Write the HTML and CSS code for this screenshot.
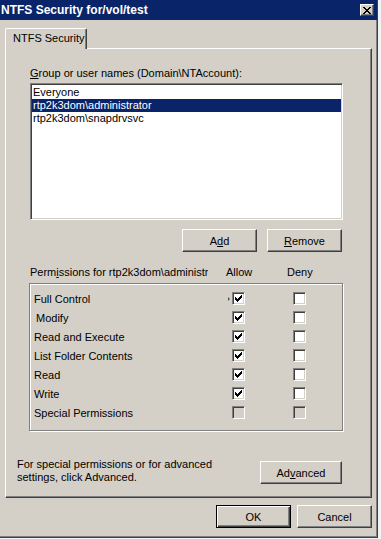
FILE: index.html
```html
<!DOCTYPE html>
<html lang="en">
<head>
    <meta charset="UTF-8">
    <meta name="viewport" content="width=device-width, initial-scale=1.0">
    <title>NTFS Security</title>
    <link rel="stylesheet" href="styles.css">
</head>
<body>
    <div class="dialog">
        <!-- Заголовок окна -->
        <div class="titlebar">
            <span class="title">NTFS Security for/vol/test</span>
            <span class="close-btn">
                <svg width="8" height="7" viewBox="0 0 8 7"><path d="M0 0.5h2M6 0.5h2M1 1.5h2M5 1.5h2M2 2.5h4M3 3.5h2M2 4.5h4M1 5.5h2M5 5.5h2M0 6.5h2M6 6.5h2" stroke="#000" stroke-width="1"/></svg>
            </span>
        </div>

        <div class="dialog-body">
            <div class="tabs">
                <div class="tab">NTFS Security</div>
            </div>

            <div class="tab-panel">
                <!-- Пользователи и группы -->
                <div class="users">
                    <div class="field-label"><u>G</u>roup or user names (Domain\NTAccount):</div>
                    <div class="listbox">
                        <div class="list-item">Everyone</div>
                        <div class="list-item selected">rtp2k3dom\administrator</div>
                        <div class="list-item">rtp2k3dom\snapdrvsvc</div>
                    </div>
                    <div class="button-row">
                        <button class="btn">A<u>d</u>d</button>
                        <button class="btn"><u>R</u>emove</button>
                    </div>
                </div>

                <!-- Разрешения -->
                <div class="perms">
                    <div class="perm-head">
                        <span class="perm-title">Perm<u>i</u>ssions for rtp2k3dom\administrator</span>
                        <span>Allow</span>
                        <span>Deny</span>
                    </div>
                    <div class="perm-box">
                        <div class="perm-row">
                            <span>Full Control</span>
                            <span class="check focus"><svg width="7" height="7" viewBox="0 0 7 7"><path d="M0.5 2v3M1.5 3v3M2.5 4v3M3.5 3v3M4.5 2v3M5.5 1v3M6.5 0v3" stroke="#000"/></svg></span>
                            <span class="check"></span>
                        </div>
                        <div class="perm-row">
                            <span class="nudge">Modify</span>
                            <span class="check"><svg width="7" height="7" viewBox="0 0 7 7"><path d="M0.5 2v3M1.5 3v3M2.5 4v3M3.5 3v3M4.5 2v3M5.5 1v3M6.5 0v3" stroke="#000"/></svg></span>
                            <span class="check"></span>
                        </div>
                        <div class="perm-row">
                            <span>Read and Execute</span>
                            <span class="check"><svg width="7" height="7" viewBox="0 0 7 7"><path d="M0.5 2v3M1.5 3v3M2.5 4v3M3.5 3v3M4.5 2v3M5.5 1v3M6.5 0v3" stroke="#000"/></svg></span>
                            <span class="check"></span>
                        </div>
                        <div class="perm-row">
                            <span>List Folder Contents</span>
                            <span class="check"><svg width="7" height="7" viewBox="0 0 7 7"><path d="M0.5 2v3M1.5 3v3M2.5 4v3M3.5 3v3M4.5 2v3M5.5 1v3M6.5 0v3" stroke="#000"/></svg></span>
                            <span class="check"></span>
                        </div>
                        <div class="perm-row">
                            <span>Read</span>
                            <span class="check"><svg width="7" height="7" viewBox="0 0 7 7"><path d="M0.5 2v3M1.5 3v3M2.5 4v3M3.5 3v3M4.5 2v3M5.5 1v3M6.5 0v3" stroke="#000"/></svg></span>
                            <span class="check"></span>
                        </div>
                        <div class="perm-row">
                            <span>Write</span>
                            <span class="check"><svg width="7" height="7" viewBox="0 0 7 7"><path d="M0.5 2v3M1.5 3v3M2.5 4v3M3.5 3v3M4.5 2v3M5.5 1v3M6.5 0v3" stroke="#000"/></svg></span>
                            <span class="check"></span>
                        </div>
                        <div class="perm-row">
                            <span>Special Permissions</span>
                            <span class="check disabled"></span>
                            <span class="check disabled"></span>
                        </div>
                    </div>
                </div>

                <div class="advanced-row">
                    <p>For special permissions or for advanced<br>settings, click Advanced.</p>
                    <button class="btn btn-advanced">Ad<u>v</u>anced</button>
                </div>
            </div>

            <div class="dialog-buttons">
                <button class="btn btn-default">OK</button>
                <button class="btn">Cancel</button>
            </div>
        </div>
    </div>
</body>
</html>
```

FILE: styles.css
```css
* {
    box-sizing: border-box;
}

body {
    margin: 0;
    background: #f2f2f2;
    font-family: Tahoma, "Liberation Sans", sans-serif;
    font-size: 11px;
    color: #000;
}

/* Окно */
.dialog {
    width: 378px;
    height: 538px;
    background: #d4d0c8;
    border-right: 1px solid #404040;
    border-bottom: 1px solid #404040;
    box-shadow: inset -1px -1px #808080;
}

.titlebar {
    height: 20px;
    background: #0a246a;
    color: #fff;
    display: flex;
    align-items: center;
    justify-content: space-between;
    padding: 0 3px 0 1px;
}

.title {
    font-weight: bold;
    font-size: 12px;
}

.close-btn {
    width: 14px;
    height: 12px;
    background: #d4d0c8;
    border: 1px solid;
    border-color: #fff #404040 #404040 #fff;
    box-shadow: inset -1px -1px #808080;
    display: flex;
    align-items: center;
    justify-content: center;
}

.close-btn svg {
    display: block;
}

.dialog-body {
    padding: 8px 5px 0 5px;
}

/* Вкладки */
.tabs {
    display: flex;
}

.tab {
    position: relative;
    z-index: 1;
    width: 82px;
    height: 21px;
    margin-bottom: -1px;
    padding-left: 7px;
    line-height: 19px;
    background: #d4d0c8;
    border-top: 1px solid #fff;
    border-left: 1px solid #fff;
    border-right: 1px solid #404040;
    box-shadow: inset -1px 0 #808080;
    border-radius: 2px 2px 0 0;
}

.tab-panel {
    height: 450px;
    border: 1px solid;
    border-color: #fff #404040 #404040 #fff;
    box-shadow: inset -1px -1px #808080;
    padding: 18px 0 0 11px;
}

/* Список пользователей */
.users {
    margin-left: 13px;
    width: 313px;
}

.field-label {
    line-height: 13px;
    height: 13px;
}

.listbox {
    margin-top: 3px;
    height: 137px;
    background: #fff;
    border: 1px solid;
    border-color: #808080 #fff #fff #808080;
    box-shadow: inset 1px 1px #404040, inset -1px -1px #d4d0c8;
    padding: 2px 1px 0 1px;
}

.list-item {
    height: 13px;
    line-height: 13px;
    padding-left: 1px;
    white-space: nowrap;
}

.list-item.selected {
    background: #0a246a;
    color: #fff;
}

.button-row {
    display: flex;
    justify-content: flex-end;
    gap: 10px;
    margin-top: 9px;
    padding-right: 1px;
}

/* Кнопки */
.btn {
    width: 75px;
    height: 23px;
    padding: 0;
    font: inherit;
    color: #000;
    background: #d4d0c8;
    border: 1px solid;
    border-color: #fff #404040 #404040 #fff;
    box-shadow: inset -1px -1px #808080;
    border-radius: 0;
}

.btn-default {
    border-color: #000;
    box-shadow: inset 1px 1px #fff, inset -1px -1px #404040, inset -2px -2px #808080;
}

.btn-advanced {
    width: 82px;
    margin: 3px 29px 0 auto;
}

/* Разрешения */
.perms {
    margin-left: 13px;
    margin-top: 14px;
    width: 313px;
}

.perm-head {
    display: grid;
    grid-template-columns: 196px 61px auto;
    line-height: 13px;
}

.perm-title {
    width: 178px;
    overflow: hidden;
    white-space: nowrap;
}

.perm-box {
    margin: 4px 0 0 -1px;
    width: 314px;
    height: 148px;
    border: 1px solid #808080;
    box-shadow: inset 1px 1px #fff, 1px 1px #fff;
    padding: 5px 0 0 4px;
}

.perm-row {
    display: grid;
    grid-template-columns: 198px 61px 13px;
    align-items: center;
    height: 19px;
}

.nudge {
    padding-left: 2px;
}

.check {
    position: relative;
    width: 13px;
    height: 13px;
    background: #fff;
    border: 1px solid;
    border-color: #808080 #fff #fff #808080;
    box-shadow: inset 1px 1px #404040, inset -1px -1px #d4d0c8;
    display: flex;
    align-items: center;
    justify-content: center;
}

.check svg {
    display: block;
}

.check.disabled {
    background: #d4d0c8;
}

/* Маленький указатель фокуса */
.check.focus::before {
    content: "";
    position: absolute;
    left: -5px;
    top: 4px;
    border-left: 2px solid #555;
    border-top: 2px solid transparent;
    border-bottom: 2px solid transparent;
}

.advanced-row {
    display: flex;
    align-items: flex-start;
    margin-top: 27px;
}

.advanced-row p {
    margin: 0;
    line-height: 13px;
}

.dialog-buttons {
    display: flex;
    justify-content: flex-end;
    gap: 6px;
    margin-top: 7px;
}
```
